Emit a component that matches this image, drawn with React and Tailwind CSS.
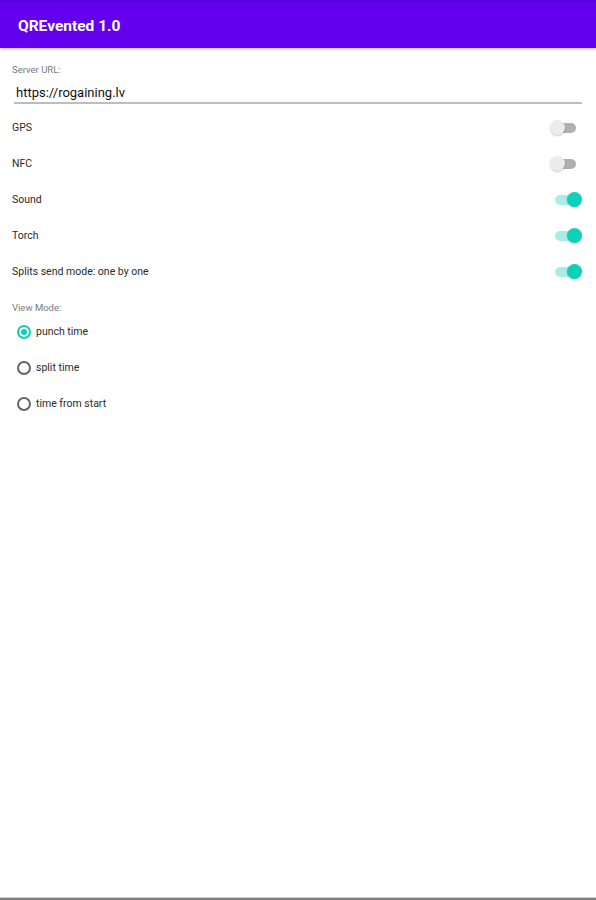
import React from "react";

function Switch({ on }) {
  return (
    <div className="relative w-[32px] h-[16px] shrink-0">
      <div
        className={
          on
            ? "absolute left-[5px] right-[4px] top-[3px] h-[10px] rounded-full bg-[#a8eee6]"
            : "absolute left-[5px] right-[6px] top-[3px] h-[10px] rounded-full bg-[#b0b0b0]"
        }
      />
      <div
        className={
          on
            ? "absolute right-0 top-0 w-[15px] h-[15px] rounded-full bg-[#0fd0b8] shadow-[0_1px_2px_rgba(0,0,0,0.2)]"
            : "absolute left-0 top-0 w-[15px] h-[15px] rounded-full bg-[#ececec] shadow-[0_1px_2px_rgba(0,0,0,0.2)]"
        }
      />
    </div>
  );
}

function Row({ label, on }) {
  return (
    <div className="h-[36px] flex items-center justify-between pl-[12px] pr-[14px]">
      <span className="text-[10.5px] text-[#2a2a2a] leading-[12px]">{label}</span>
      <Switch on={on} />
    </div>
  );
}

function Radio({ label, checked }) {
  return (
    <div className="h-[36px] flex items-center pl-[17px]">
      <div
        className={
          checked
            ? "w-[14px] h-[14px] rounded-full border-2 border-[#0fd0b8] flex items-center justify-center"
            : "w-[14px] h-[14px] rounded-full border-2 border-[#666666]"
        }
      >
        {checked && <div className="w-[6px] h-[6px] rounded-full bg-[#0fd0b8]" />}
      </div>
      <span className="ml-[5px] text-[10.5px] text-[#2a2a2a] leading-[12px]">{label}</span>
    </div>
  );
}

export default function App() {
  return (
    <div
      className="w-[596px] h-[900px] bg-white flex flex-col"
      style={{ fontFamily: "Roboto, 'Noto Sans', sans-serif" }}
    >
      <div className="h-[48px] shrink-0 bg-[#6200ee] border-t-[2px] border-[#5800dc] flex items-center pl-[18px] shadow-[0_1px_3px_rgba(0,0,0,0.3)]">
        <span className="text-white font-bold text-[15.5px] leading-[18px] mt-[2px]">QREvented 1.0</span>
      </div>
      <div className="flex-1 flex flex-col">
        <div className="mt-[16px] pl-[12px] text-[9.5px] leading-[12px] text-[#7a7a7a]">Server URL:</div>
        <div className="mt-[9px] ml-[14px] mr-[14px] pl-[2px] h-[19px] border-b-[2px] border-[#bdbdbd] text-[13px] leading-[16px] text-[#111]">
          https://rogaining.lv
        </div>
        <div className="mt-[6px]">
          <Row label="GPS" on={false} />
          <Row label="NFC" on={false} />
          <Row label="Sound" on={true} />
          <Row label="Torch" on={true} />
          <Row label="Splits send mode: one by one" on={true} />
        </div>
        <div className="mt-[12px] pl-[12px] text-[9.5px] leading-[12px] text-[#7a7a7a]">View Mode:</div>
        <div>
          <Radio label="punch time" checked={true} />
          <Radio label="split time" checked={false} />
          <Radio label="time from start" checked={false} />
        </div>
      </div>
      <div className="h-[1px] bg-[#cfcfcf] shrink-0" />
      <div className="h-[2px] bg-[#808080] shrink-0" />
    </div>
  );
}
